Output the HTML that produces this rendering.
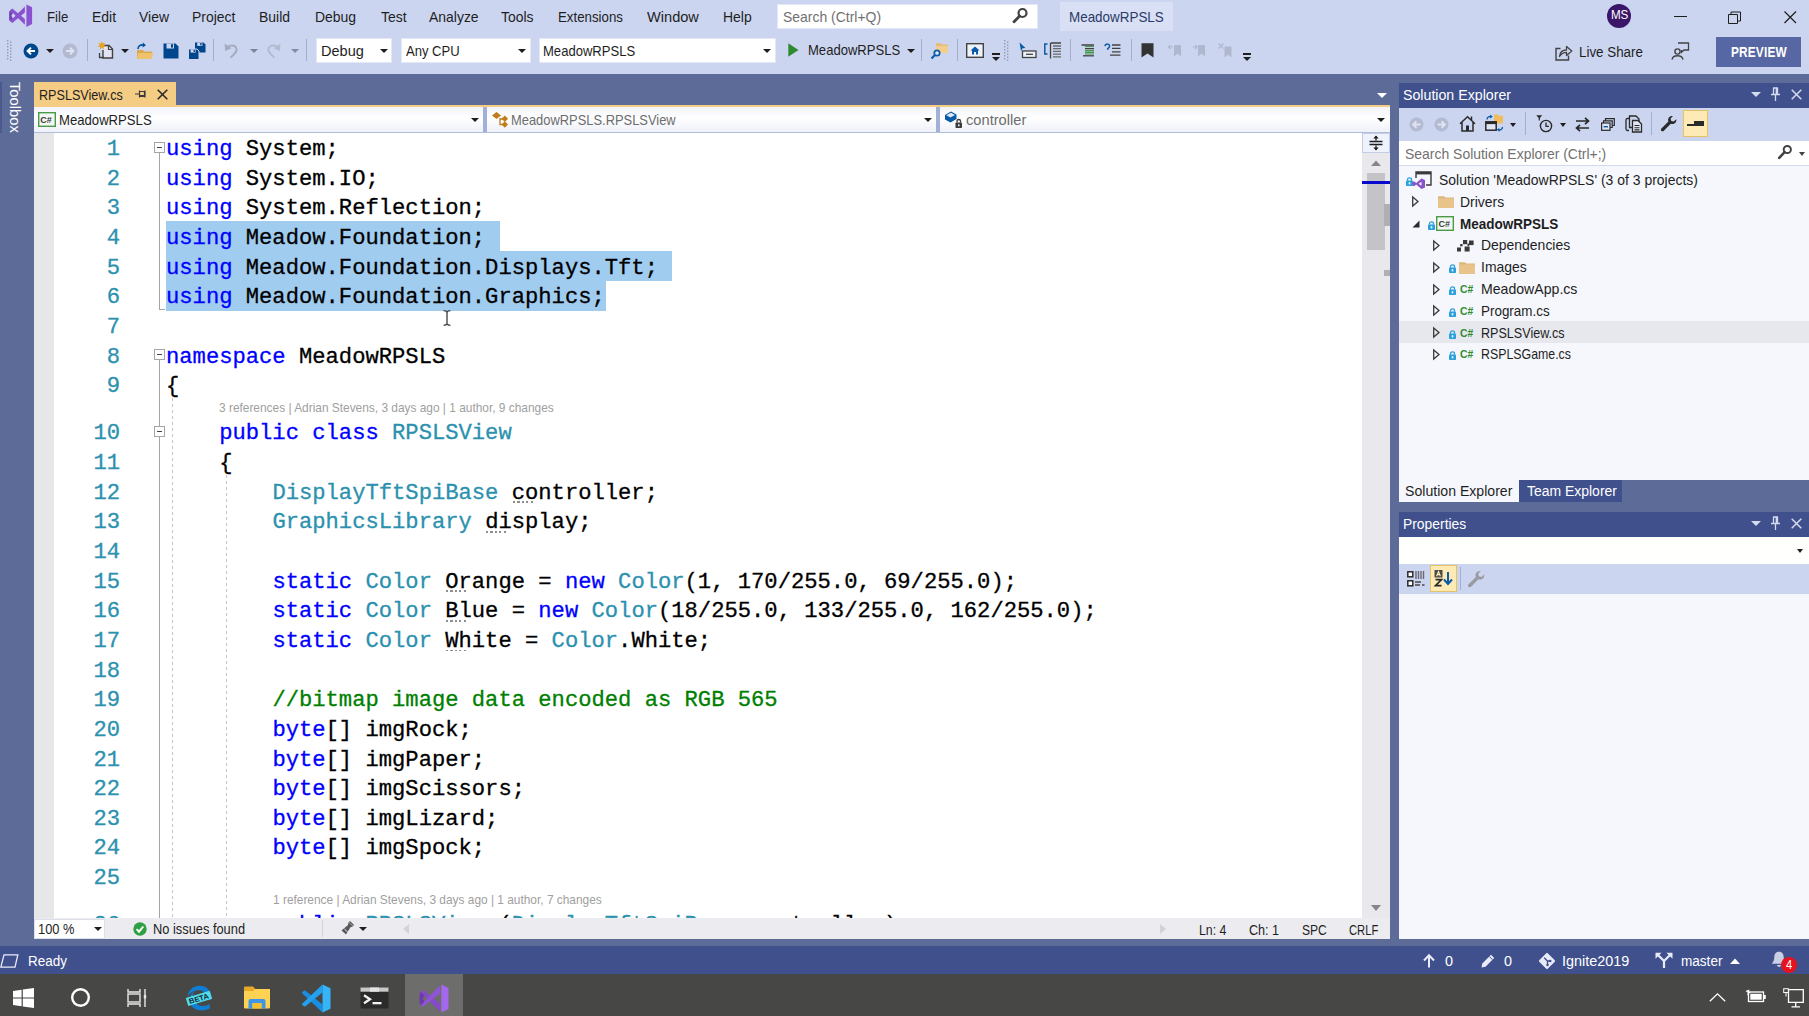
<!DOCTYPE html>
<html>
<head>
<meta charset="utf-8">
<title>MeadowRPSLS - Microsoft Visual Studio</title>
<style>
*{box-sizing:border-box;margin:0;padding:0}
html,body{width:1809px;height:1016px;overflow:hidden;background:#5d6b99;font-family:"Liberation Sans",sans-serif;font-size:14.5px;color:#1e1e1e}
.abs,.t{position:absolute;white-space:nowrap}
.t{line-height:1;transform:scaleX(.93);transform-origin:0 0}
svg{position:absolute;overflow:visible}
#top{position:absolute;left:0;top:0;width:1809px;height:74px;background:#ccd5f0}
.menu{position:absolute;top:8px;font-size:15px;line-height:18px;color:#1e1e1e;white-space:nowrap;transform:scaleX(.93);transform-origin:0 0}
.combo{position:absolute;top:38px;height:25px;background:#fff;border:1px solid #e3e8f6;font-size:15px;line-height:23px;padding-left:4px;white-space:nowrap}
.dd{position:absolute;width:0;height:0;border-left:4px solid transparent;border-right:4px solid transparent;border-top:4px solid #1e1e1e}
.sep{position:absolute;top:39px;width:1.4px;height:22px;background:#a3aecd}
/* editor */
#editor{position:absolute;left:34px;top:132px;width:1356px;height:787px;background:#fff;overflow:hidden}
#code{position:absolute;left:0;top:0;font-family:"Liberation Mono",monospace;font-size:22.17px;color:#000;-webkit-text-stroke:0.3px}
.ln{position:absolute;left:0;height:29.65px;line-height:29.65px;white-space:pre}
.num{position:absolute;left:19px;width:67px;text-align:right;color:#2b91af;height:29.65px;line-height:29.65px}
.k{color:#0000ff}.ty{color:#2b91af}.c{color:#008000}
.lens{position:absolute;font-family:"Liberation Sans",sans-serif;font-size:11.9px;color:#a0a0a0;white-space:nowrap;line-height:14px}
.sel{position:absolute;background:#a0ccf0;height:30.4px}
.guide{position:absolute;width:1px;background:repeating-linear-gradient(to bottom,#c4c4c4 0,#c4c4c4 3px,transparent 3px,transparent 6px)}
.dot{position:relative}.dot i{position:absolute;left:1px;bottom:2.6px;width:21px;height:1.6px;background:repeating-linear-gradient(90deg,#8e8e8e 0,#8e8e8e 2.2px,transparent 2.2px,transparent 4.4px)}
/* tree */
.tr{position:absolute;left:1399px;width:410px;height:22px}
.tr .t{top:3px;font-size:15px;line-height:17px;color:#1e1e1e}
</style>
</head>
<body>
<div id="top"></div>
<!-- VS logo -->
<svg style="left:0;top:0" width="34" height="32" viewBox="0 0 34 32"><path d="M26.4 4.4 L32.1 7.2 V24 L26.4 27 Z" fill="#8a52d0"/><path d="M10 10.2 L12.3 8.5 L24.9 19 V24.8 Z" fill="#8a52d0"/><path d="M10 21.3 L12.3 23 L24.9 12.4 V6.6 Z" fill="#8a52d0"/><path d="M9.1 12.3 L10 10.2 L13 13 L11.4 15.8 L13 18.6 L10 21.3 L9.1 19.7 Z" fill="#7644b6"/></svg>
<div class="menu" style="left:46.5px;transform:scaleX(.88)">File</div>
<div class="menu" style="left:92px">Edit</div>
<div class="menu" style="left:139px">View</div>
<div class="menu" style="left:192px">Project</div>
<div class="menu" style="left:259px">Build</div>
<div class="menu" style="left:315px">Debug</div>
<div class="menu" style="left:381px">Test</div>
<div class="menu" style="left:429px">Analyze</div>
<div class="menu" style="left:501px">Tools</div>
<div class="menu" style="left:558px;transform:scaleX(.885)">Extensions</div>
<div class="menu" style="left:647px;transform:scaleX(.973)">Window</div>
<div class="menu" style="left:723px">Help</div>
<div class="abs" style="left:777px;top:4px;width:261px;height:25px;background:#fff;border:1px solid #e3e8f6"></div>
<div class="menu" style="left:783px;color:#717171">Search (Ctrl+Q)</div>
<svg style="left:1011px;top:7px" width="18" height="18" viewBox="0 0 18 18"><circle cx="11.5" cy="6" r="4" fill="none" stroke="#424242" stroke-width="2.2"/><path d="M8.6 9 L3 14.8" stroke="#424242" stroke-width="2.8" stroke-linecap="round"/></svg>
<div class="abs" style="left:1060px;top:2px;width:113px;height:29px;background:#d9e0f5"></div>
<div class="menu" style="left:1069px;color:#2b3a67;transform:scaleX(.895)">MeadowRPSLS</div>
<!-- avatar + window buttons -->
<div class="abs" style="left:1607px;top:4px;width:24px;height:24px;border-radius:12px;background:#3b1568"></div>
<div class="t" style="left:1611px;top:9px;font-size:12.5px;color:#fff;letter-spacing:-0.2px">MS</div>
<div class="abs" style="left:1674px;top:16px;width:13px;height:1px;background:#1e1e1e"></div>
<svg style="left:1728px;top:11px" width="14" height="13" viewBox="0 0 14 13"><path d="M0.5 3.5 H9.5 V12.5 H0.5 Z M3 3.5 V1 H12.5 V10 H9.5" fill="none" stroke="#1e1e1e" stroke-width="1"/></svg>
<svg style="left:1784px;top:11px" width="13" height="13" viewBox="0 0 13 13"><path d="M0.5 0.5 L12 12 M12 0.5 L0.5 12" stroke="#1e1e1e" stroke-width="1.2"/></svg>
<!-- toolbar row -->
<svg style="left:7px;top:40px" width="6" height="22" viewBox="0 0 6 22"><g fill="#8f98b5"><rect x="0" y="0" width="1.4" height="1.4"/><rect x="3" y="1.5" width="1.4" height="1.4"/><rect x="0" y="3" width="1.4" height="1.4"/><rect x="3" y="4.5" width="1.4" height="1.4"/><rect x="0" y="6" width="1.4" height="1.4"/><rect x="3" y="7.5" width="1.4" height="1.4"/><rect x="0" y="9" width="1.4" height="1.4"/><rect x="3" y="10.5" width="1.4" height="1.4"/><rect x="0" y="12" width="1.4" height="1.4"/><rect x="3" y="13.5" width="1.4" height="1.4"/><rect x="0" y="15" width="1.4" height="1.4"/><rect x="3" y="16.5" width="1.4" height="1.4"/><rect x="0" y="18" width="1.4" height="1.4"/><rect x="3" y="19.5" width="1.4" height="1.4"/></g></svg>
<!-- back / fwd -->
<svg style="left:23px;top:43px" width="16" height="16" viewBox="0 0 16 16"><circle cx="8" cy="8" r="7.5" fill="#00468c"/><path d="M12 8 H5 M8 4.6 L4.6 8 L8 11.4" fill="none" stroke="#fff" stroke-width="2"/></svg>
<div class="dd" style="left:46px;top:49px"></div>
<svg style="left:62px;top:43px" width="16" height="16" viewBox="0 0 16 16"><circle cx="8" cy="8" r="7.5" fill="#b3bacf"/><path d="M4 8 H11 M8 4.6 L11.4 8 L8 11.4" fill="none" stroke="#dfe4f3" stroke-width="2"/></svg>
<div class="sep" style="left:87px"></div>
<!-- new item -->
<svg style="left:97px;top:41px" width="18" height="19" viewBox="0 0 18 19"><path d="M7 4.5 H12 L15.5 8 V17 H6 V9" fill="#e2e3f3" stroke="#424242" stroke-width="1.4"/><path d="M11.5 4.5 V8.5 H15.5" fill="none" stroke="#424242" stroke-width="1.2"/><path d="M2.5 12 V16.5 H7" fill="none" stroke="#424242" stroke-width="1.3"/><path d="M4.5 0 L5.4 2.6 L8 1.6 L6.7 4 L9 5.2 L6.5 5.7 L7 8.4 L4.9 6.6 L3 8.6 L3.2 6 L0.5 5.6 L2.8 4.2 L1.4 1.8 L3.9 2.7 Z" fill="#e8a317"/></svg>
<div class="dd" style="left:121px;top:49px"></div>
<!-- open folder -->
<svg style="left:135px;top:42px" width="19" height="18" viewBox="0 0 19 18"><path d="M2 8 H8 L9.5 9.5 H17 V17 H2 Z" fill="#dba94e"/><path d="M3.5 11 H18.5 L16.5 17 H1.5 Z" fill="#efc36e"/><path d="M3 7 C3 3.5 6 2.5 9 3" fill="none" stroke="#00539c" stroke-width="1.6"/><path d="M7.8 0.5 L11 3.2 L7.6 5.4 Z" fill="#00539c"/></svg>
<!-- save -->
<svg style="left:163px;top:43px" width="16" height="16" viewBox="0 0 16 16"><path d="M0.5 0.5 H12.5 L15.5 3.5 V15.5 H0.5 Z" fill="#00468c"/><rect x="3.5" y="0.5" width="7.5" height="5" fill="#ccd5f0"/><rect x="8" y="1.2" width="2" height="3.4" fill="#00468c"/></svg>
<!-- save all -->
<svg style="left:188px;top:42px" width="18" height="18" viewBox="0 0 18 18"><path d="M7 0.5 H15.5 L17.5 2.5 V10.5 H7 Z" fill="#00468c"/><rect x="9.2" y="0.5" width="5.2" height="3.4" fill="#ccd5f0"/><rect x="12.2" y="1" width="1.4" height="2.3" fill="#00468c"/><path d="M0.5 7 H9 L11 9 V17.5 H0.5 Z" fill="#00468c" stroke="#ccd5f0" stroke-width="1"/><rect x="2.6" y="7.4" width="5" height="3.2" fill="#ccd5f0"/><rect x="5.6" y="7.8" width="1.3" height="2.2" fill="#00468c"/></svg>
<div class="sep" style="left:213px"></div>
<!-- undo / redo -->
<svg style="left:223px;top:42px" width="17" height="17" viewBox="0 0 17 17"><path d="M3 7.5 C5 2.5 12 2 13.5 6.5 C14.5 10 11 12.5 7.5 15.5" fill="none" stroke="#a4abc0" stroke-width="2"/><path d="M1.5 1.5 L2.2 9 L8.5 6.2 Z" fill="#a4abc0"/></svg>
<div class="dd" style="left:250px;top:49px;border-top-color:#7f8598"></div>
<svg style="left:265px;top:42px" width="17" height="17" viewBox="0 0 17 17"><g transform="translate(17,0) scale(-1,1)"><path d="M3 7.5 C5 2.5 12 2 13.5 6.5 C14.5 10 11 12.5 7.5 15.5" fill="none" stroke="#b4bbd0" stroke-width="2"/><path d="M1.5 1.5 L2.2 9 L8.5 6.2 Z" fill="#b4bbd0"/></g></svg>
<div class="dd" style="left:291px;top:49px;border-top-color:#858b9e"></div>
<div class="sep" style="left:306px"></div>
<div class="combo" style="left:316px;width:76px"><span style="display:inline-block;transform:scaleX(.97);transform-origin:0 0">Debug</span></div><div class="dd" style="left:380px;top:49px"></div>
<div class="combo" style="left:401px;width:130px"><span style="display:inline-block;transform:scaleX(.87);transform-origin:0 0">Any CPU</span></div><div class="dd" style="left:518px;top:49px"></div>
<div class="combo" style="left:539px;width:237px;padding-left:3px"><span style="display:inline-block;transform:scaleX(.87);transform-origin:0 0">MeadowRPSLS</span></div><div class="dd" style="left:763px;top:49px"></div>
<svg style="left:788px;top:43px" width="11" height="14" viewBox="0 0 11 14"><path d="M0.3 0.3 L10.5 7 L0.3 13.7 Z" fill="#2d8a2d"/></svg>
<div class="menu" style="left:808px;top:41px;transform:scaleX(.87)">MeadowRPSLS</div>
<div class="dd" style="left:907px;top:49px"></div>
<div class="sep" style="left:921px"></div>
<!-- find in files -->
<svg style="left:930px;top:41px" width="20" height="19" viewBox="0 0 20 19"><path d="M6 2 H11 L12.5 3.5 H18 V12 H6 Z" fill="#e3bd7c"/><path d="M6 5 H18 V12 H6 Z" fill="#f2cd8d"/><circle cx="7" cy="12" r="2.7" fill="#dfe8fa" stroke="#0a5aa8" stroke-width="1.7"/><path d="M5 14 L1.5 17.5" stroke="#0a5aa8" stroke-width="2.2"/></svg>
<div class="sep" style="left:957px"></div>
<svg style="left:966px;top:43px" width="18" height="15" viewBox="0 0 18 15"><rect x="0.7" y="0.7" width="16.6" height="13.6" fill="#eef2fb" stroke="#424242" stroke-width="1.4"/><path d="M9 3.5 L4.5 7.5 H6 V11.5 H8 V9 H10 V11.5 H12 V7.5 H13.5 Z" fill="#0a5aa8"/></svg>
<div class="abs" style="left:992px;top:53px;width:8px;height:1.5px;background:#1e1e1e"></div><div class="dd" style="left:992px;top:57px"></div>
<svg style="left:1004px;top:40px" width="6" height="22" viewBox="0 0 6 22"><g fill="#8f98b5"><rect x="0" y="0" width="1.4" height="1.4"/><rect x="3" y="1.5" width="1.4" height="1.4"/><rect x="0" y="3" width="1.4" height="1.4"/><rect x="3" y="4.5" width="1.4" height="1.4"/><rect x="0" y="6" width="1.4" height="1.4"/><rect x="3" y="7.5" width="1.4" height="1.4"/><rect x="0" y="9" width="1.4" height="1.4"/><rect x="3" y="10.5" width="1.4" height="1.4"/><rect x="0" y="12" width="1.4" height="1.4"/><rect x="3" y="13.5" width="1.4" height="1.4"/><rect x="0" y="15" width="1.4" height="1.4"/><rect x="3" y="16.5" width="1.4" height="1.4"/><rect x="0" y="18" width="1.4" height="1.4"/><rect x="3" y="19.5" width="1.4" height="1.4"/></g></svg>
<svg style="left:1019px;top:42px" width="18" height="17" viewBox="0 0 18 17"><path d="M0.5 0.5 L6.5 6 L3.6 6.3 L2 9 Z" fill="#0a5aa8"/><rect x="3.5" y="9" width="13.5" height="6.5" fill="#eef2fb" stroke="#424242" stroke-width="1.3"/><path d="M7 12.3 H14" stroke="#424242" stroke-width="1.3"/></svg>
<svg style="left:1044px;top:42px" width="18" height="17" viewBox="0 0 18 17"><path d="M3.5 2 H0.8 V12 H3.5" fill="none" stroke="#0a5aa8" stroke-width="1.5"/><path d="M6.5 1 H17 M6.5 1 V16.5" stroke="#424242" stroke-width="1.3" fill="none"/><path d="M9 4 H17 M9 6.7 H17 M9 9.4 H17 M9 12.1 H17 M9 14.8 H17" stroke="#6a6a6a" stroke-width="1.3"/></svg>
<div class="sep" style="left:1070px"></div>
<svg style="left:1081px;top:44px" width="14" height="13" viewBox="0 0 14 13"><path d="M0.5 1 H13 M4 4.6 H13" stroke="#424242" stroke-width="1.3"/><path d="M4 8.2 H13" stroke="#2d8a2d" stroke-width="1.3"/><path d="M2 11.8 H13" stroke="#424242" stroke-width="1.3"/><path d="M4 2.6 H13 M4 6.4 H13 M4 10 H13" stroke="#2d8a2d" stroke-width="0.9"/></svg>
<svg style="left:1104px;top:43px" width="17" height="15" viewBox="0 0 17 15"><path d="M1 3.2 C1.5 0.3 6 0.5 5.6 3.4 C5.3 5 3.5 5 3.5 6.8" fill="none" stroke="#0a5aa8" stroke-width="1.5"/><path d="M8 2 H16.5 M8 5.4 H16.5 M8 8.8 H16.5 M6 12.2 H16.5" stroke="#424242" stroke-width="1.3"/></svg>
<div class="sep" style="left:1131px"></div>
<svg style="left:1141px;top:43px" width="13" height="15" viewBox="0 0 13 15"><path d="M0.5 0.3 H12.5 V14.6 L6.5 10.4 L0.5 14.6 Z" fill="#333"/></svg>
<svg style="left:1168px;top:43px" width="14" height="14" viewBox="0 0 14 14"><path d="M6 2 H13 V13.5 L9.5 10.8 L6 13.5 Z" fill="#b0b8cf"/><path d="M0.5 4 H5 M2.5 2 L0.5 4 L2.5 6" fill="none" stroke="#b0b8cf" stroke-width="1.2"/></svg>
<svg style="left:1192px;top:43px" width="14" height="14" viewBox="0 0 14 14"><path d="M6 2 H13 V13.5 L9.5 10.8 L6 13.5 Z" fill="#b0b8cf"/><path d="M0.5 4 H5 M3 2 L5 4 L3 6" fill="none" stroke="#b0b8cf" stroke-width="1.2"/></svg>
<svg style="left:1218px;top:43px" width="15" height="15" viewBox="0 0 15 15"><path d="M6.5 3.5 H13.5 V14.5 L10 11.8 L6.5 14.5 Z" fill="#b0b8cf"/><path d="M0.5 0.5 L5.5 5.5 M5.5 0.5 L0.5 5.5" stroke="#b0b8cf" stroke-width="1.2"/></svg>
<div class="abs" style="left:1243px;top:53px;width:8px;height:1.5px;background:#1e1e1e"></div><div class="dd" style="left:1243px;top:57px"></div>
<!-- live share -->
<svg style="left:1555px;top:44px" width="18" height="17" viewBox="0 0 18 17"><path d="M5.5 4.5 H1 V16 H13.5 V11.5" fill="none" stroke="#424242" stroke-width="1.4"/><path d="M4.5 12.5 C5 8 8 6 11.5 6 V2.5 L16.8 7 L11.5 11.5 V8.3 C9 8.3 6.5 9 4.5 12.5 Z" fill="none" stroke="#424242" stroke-width="1.3" stroke-linejoin="round"/></svg>
<div class="menu" style="left:1579px;top:43px;font-size:15.5px;transform:scaleX(.862)">Live Share</div>
<svg style="left:1671px;top:42px" width="19" height="19" viewBox="0 0 19 19"><path d="M7 1 H17.5 V8 H13 L10.5 10.3 V8" fill="none" stroke="#424242" stroke-width="1.3"/><circle cx="6.5" cy="9.5" r="2.6" fill="none" stroke="#424242" stroke-width="1.4"/><path d="M1 17.5 C2 12.5 11 12.5 12 17.5" fill="none" stroke="#424242" stroke-width="1.4"/></svg>
<div class="abs" style="left:1716px;top:37px;width:85px;height:30px;background:#5767a3"></div>
<div class="t" style="left:1731px;top:45px;font-size:14px;font-weight:bold;color:#fff;letter-spacing:0.2px;transform:scaleX(.846)">PREVIEW</div>
<!-- left toolbox strip -->
<div class="abs" style="left:0;top:82px;width:2.4px;height:51px;background:#4a5a8e"></div>
<div class="abs" style="left:5px;top:82px;width:20px;height:56px;"><div style="position:absolute;left:0;top:0;transform:rotate(90deg) scaleX(.95);transform-origin:0 0;margin-left:19px;font-size:15.5px;line-height:18px;color:#fff;white-space:nowrap">Toolbox</div></div>
<!-- tab strip -->
<div class="abs" style="left:34px;top:82px;width:142px;height:24px;background:#f5cc84"></div>
<div class="abs" style="left:34px;top:105px;width:1356px;height:2px;background:#f5cc84"></div>
<div class="t" style="left:39px;top:87px;font-size:15px;color:#1e1e1e;transform:scaleX(.84)">RPSLSView.cs</div>
<svg style="left:135px;top:89px" width="12" height="10" viewBox="0 0 12 10"><path d="M0 5 H4.5 M4.5 1.5 V8.5 M4.5 2.5 H9.5 V6.5 H4.5 M4.5 7.5 H9.5 M10 1.5 V8.5" fill="none" stroke="#3a3a3a" stroke-width="1.2"/></svg>
<svg style="left:157px;top:89px" width="11" height="11" viewBox="0 0 11 11"><path d="M0.7 0.7 L10.3 10.3 M10.3 0.7 L0.7 10.3" stroke="#2a2a2a" stroke-width="1.6"/></svg>
<div class="dd" style="left:1377px;top:93px;border-width:5px 5px 0 5px;border-top-color:#fff"></div>
<!-- nav bar -->
<div class="abs" style="left:34px;top:107px;width:1356px;height:26px;background:linear-gradient(#f2f4fb,#ffffff 45%,#eef1f9);border-bottom:1px solid #b9c3de"></div>
<div class="abs" style="left:483px;top:107px;width:4px;height:25px;background:#a3b0d6"></div>
<div class="abs" style="left:936px;top:107px;width:4px;height:25px;background:#a3b0d6"></div>
<svg style="left:38px;top:112px" width="18" height="15" viewBox="0 0 18 15"><rect x="0.7" y="0.7" width="16.6" height="13.6" fill="#f4f8f4" stroke="#4a9a4a" stroke-width="1.4"/><text x="2.3" y="11" font-family="Liberation Sans" font-weight="bold" font-size="9" fill="#3a3a3a">C#</text></svg>
<div class="t" style="left:59px;top:112px;font-size:15px;color:#1e1e1e;transform:scaleX(.875)">MeadowRPSLS</div>
<div class="dd" style="left:471px;top:118px"></div>
<svg style="left:491px;top:111px" width="18" height="17" viewBox="0 0 18 17"><path d="M5.5 1 L10 4.5 L5.5 8 L1 4.5 Z" fill="#c27d1a"/><path d="M9 7 V13.5 H12 M9 8 H12" fill="none" stroke="#c27d1a" stroke-width="1.3"/><rect x="11.5" y="5.5" width="4.6" height="4.6" fill="#c27d1a" transform="rotate(45 13.8 7.8)"/><rect x="11.5" y="11.2" width="4.6" height="4.6" fill="#c27d1a" transform="rotate(45 13.8 13.5)"/></svg>
<div class="t" style="left:511px;top:112px;font-size:15px;color:#6d6d6d;transform:scaleX(.86)">MeadowRPSLS.RPSLSView</div>
<div class="dd" style="left:924px;top:118px"></div>
<svg style="left:944px;top:110px" width="20" height="19" viewBox="0 0 20 19"><path d="M1 5 L7 1.5 L12.5 4.5 V9 L6.5 12.5 L1 9.5 Z" fill="#0a5aa8"/><path d="M2.2 5.2 L7 2.8 L11 5 L6.5 7.5 Z" fill="#dfe8fa"/><rect x="11.5" y="12.5" width="6.5" height="5.5" rx="0.8" fill="#3a3a3a"/><path d="M13 12.5 V11 C13 9 16.5 9 16.5 11 V12.5" fill="none" stroke="#3a3a3a" stroke-width="1.3"/><rect x="14.1" y="14.3" width="1.4" height="2" fill="#fff"/></svg>
<div class="t" style="left:966px;top:112px;font-size:15px;color:#6d6d6d;transform:scaleX(.977)">controller</div>
<div class="dd" style="left:1377px;top:118px"></div>
<!--EDSTART-->
<div id="editor">
<div class="abs" style="left:0;top:0;width:20px;height:787px;background:#e6e7e8"></div>
<div class="sel" style="left:132px;top:89.3px;width:333.5px"></div>
<div class="sel" style="left:132px;top:119.0px;width:506.4px"></div>
<div class="sel" style="left:132px;top:148.7px;width:439.9px"></div>
<div class="abs" style="left:125px;top:15.2px;width:1px;height:162.1px;background:#a5a5a5"></div>
<div class="abs" style="left:125px;top:177.3px;width:6px;height:1px;background:#a5a5a5"></div>
<div class="abs" style="left:125px;top:222.8px;width:1px;height:600px;background:#a5a5a5"></div>
<div class="abs" style="left:120px;top:9.7px;width:11px;height:11px;background:#fff;border:1px solid #a5a5a5"><div style="position:absolute;left:2px;top:4px;width:5px;height:1px;background:#444"></div></div>
<div class="abs" style="left:120px;top:217.3px;width:11px;height:11px;background:#fff;border:1px solid #a5a5a5"><div style="position:absolute;left:2px;top:4px;width:5px;height:1px;background:#444"></div></div>
<div class="abs" style="left:120px;top:294.0px;width:11px;height:11px;background:#fff;border:1px solid #a5a5a5"><div style="position:absolute;left:2px;top:4px;width:5px;height:1px;background:#444"></div></div>
<div class="guide" style="left:138px;top:266.2px;height:600px"></div>
<div class="guide" style="left:192px;top:342.9px;height:600px"></div>
<div class="abs" style="left:0;top:0;width:1356px;height:1.4px;background:#b3bdd8"></div>
<svg style="left:409px;top:178px" width="8" height="16" viewBox="0 0 8 16"><path d="M0.6 0.7 C2.6 0.7 3.6 1.2 4 2.2 C4.4 1.2 5.4 0.7 7.4 0.7 M4 2 V14 M0.6 15.3 C2.6 15.3 3.6 14.8 4 13.8 C4.4 14.8 5.4 15.3 7.4 15.3" fill="none" stroke="#3c3c3c" stroke-width="1.3"/></svg>
<div id="code">
<div class="num" style="top:3.1px">1</div><div class="ln" style="left:132px;top:3.1px"><span class="k">using</span> System;</div>
<div class="num" style="top:32.8px">2</div><div class="ln" style="left:132px;top:32.8px"><span class="k">using</span> System.IO;</div>
<div class="num" style="top:62.4px">3</div><div class="ln" style="left:132px;top:62.4px"><span class="k">using</span> System.Reflection;</div>
<div class="num" style="top:92.0px">4</div><div class="ln" style="left:132px;top:92.0px"><span class="k">using</span> Meadow.Foundation;</div>
<div class="num" style="top:121.7px">5</div><div class="ln" style="left:132px;top:121.7px"><span class="k">using</span> Meadow.Foundation.Displays.Tft;</div>
<div class="num" style="top:151.3px">6</div><div class="ln" style="left:132px;top:151.3px"><span class="k">using</span> Meadow.Foundation.Graphics;</div>
<div class="num" style="top:181.0px">7</div><div class="ln" style="left:132px;top:181.0px"></div>
<div class="num" style="top:210.6px">8</div><div class="ln" style="left:132px;top:210.6px"><span class="k">namespace</span> MeadowRPSLS</div>
<div class="num" style="top:240.3px">9</div><div class="ln" style="left:132px;top:240.3px">{</div>
<div class="num" style="top:287.3px">10</div><div class="ln" style="left:132px;top:287.3px">    <span class="k">public</span> <span class="k">class</span> <span class="ty">RPSLSView</span></div>
<div class="num" style="top:317.0px">11</div><div class="ln" style="left:132px;top:317.0px">    {</div>
<div class="num" style="top:346.6px">12</div><div class="ln" style="left:132px;top:346.6px">        <span class="ty">DisplayTftSpiBase</span> <span class="dot">co<i></i></span>ntroller;</div>
<div class="num" style="top:376.3px">13</div><div class="ln" style="left:132px;top:376.3px">        <span class="ty">GraphicsLibrary</span> <span class="dot">di<i></i></span>splay;</div>
<div class="num" style="top:405.9px">14</div><div class="ln" style="left:132px;top:405.9px"></div>
<div class="num" style="top:435.6px">15</div><div class="ln" style="left:132px;top:435.6px">        <span class="k">static</span> <span class="ty">Color</span> <span class="dot">Or<i></i></span>ange = <span class="k">new</span> <span class="ty">Color</span>(1, 170/255.0, 69/255.0);</div>
<div class="num" style="top:465.2px">16</div><div class="ln" style="left:132px;top:465.2px">        <span class="k">static</span> <span class="ty">Color</span> <span class="dot">Bl<i></i></span>ue = <span class="k">new</span> <span class="ty">Color</span>(18/255.0, 133/255.0, 162/255.0);</div>
<div class="num" style="top:494.9px">17</div><div class="ln" style="left:132px;top:494.9px">        <span class="k">static</span> <span class="ty">Color</span> <span class="dot">Wh<i></i></span>ite = <span class="ty">Color</span>.White;</div>
<div class="num" style="top:524.5px">18</div><div class="ln" style="left:132px;top:524.5px"></div>
<div class="num" style="top:554.2px">19</div><div class="ln" style="left:132px;top:554.2px">        <span class="c">//bitmap image data encoded as RGB 565</span></div>
<div class="num" style="top:583.9px">20</div><div class="ln" style="left:132px;top:583.9px">        <span class="k">byte</span>[] imgRock;</div>
<div class="num" style="top:613.5px">21</div><div class="ln" style="left:132px;top:613.5px">        <span class="k">byte</span>[] imgPaper;</div>
<div class="num" style="top:643.1px">22</div><div class="ln" style="left:132px;top:643.1px">        <span class="k">byte</span>[] imgScissors;</div>
<div class="num" style="top:672.8px">23</div><div class="ln" style="left:132px;top:672.8px">        <span class="k">byte</span>[] imgLizard;</div>
<div class="num" style="top:702.4px">24</div><div class="ln" style="left:132px;top:702.4px">        <span class="k">byte</span>[] imgSpock;</div>
<div class="num" style="top:732.1px">25</div><div class="ln" style="left:132px;top:732.1px"></div>
<div class="num" style="top:779.1px">26</div><div class="ln" style="left:132px;top:779.1px">        <span class="k">public</span> <span class="ty">RPSLSView</span> (<span class="ty">DisplayTftSpiBase</span> controller)</div>
</div>
<div class="lens" style="left:185px;top:268.7px">3 references | Adrian Stevens, 3 days ago | 1 author, 9 changes</div>
<div class="lens" style="left:239px;top:760.5px">1 reference | Adrian Stevens, 3 days ago | 1 author, 7 changes</div>
</div>
<!--EDEND-->
<!-- editor v-scrollbar -->
<div class="abs" style="left:1362px;top:133px;width:28px;height:786px;background:#e9e9ed"></div>
<div class="abs" style="left:1362px;top:133px;width:28px;height:20px;background:#eef2fc;border:1px solid #c5cde6"></div>
<svg style="left:1369px;top:135px" width="14" height="16" viewBox="0 0 14 16"><path d="M0.5 6.5 H13.5 M0.5 9.5 H13.5 M7 1 V5.5 M7 10.5 V15" stroke="#1e1e1e" stroke-width="1.3"/><path d="M4.3 3.6 L7 0.6 L9.7 3.6 Z M4.3 12.4 L7 15.4 L9.7 12.4 Z" fill="#1e1e1e"/></svg>
<svg style="left:1371px;top:160px" width="10" height="6" viewBox="0 0 10 6"><path d="M0 6 L5 0.5 L10 6 Z" fill="#86868a"/></svg>
<div class="abs" style="left:1367px;top:173px;width:18px;height:77px;background:#c4c4c8"></div>
<div class="abs" style="left:1384px;top:204px;width:6px;height:22px;background:#b0b0b2"></div>
<div class="abs" style="left:1384px;top:270px;width:6px;height:6px;background:#b0b0b2"></div>
<div class="abs" style="left:1362px;top:181px;width:28px;height:3px;background:#0a0acd"></div>
<div class="dd" style="left:1371px;top:905px;border-width:6px 5px 0 5px;border-top-color:#86868a"></div>
<!-- editor bottom bar -->
<div class="abs" style="left:34px;top:918px;width:1356px;height:21px;background:#ececf0"></div>
<div class="abs" style="left:34px;top:919px;width:71px;height:20px;background:#fff;border:1px solid #dcdfe9"></div>
<div class="t" style="left:38px;top:922px;font-size:14.5px;color:#1e1e1e;transform:scaleX(.885)">100 %</div>
<div class="dd" style="left:94px;top:927px"></div>
<svg style="left:133px;top:922px" width="14" height="14" viewBox="0 0 14 14"><circle cx="7" cy="7" r="6.7" fill="#2ea043"/><path d="M3.6 7.2 L6 9.7 L10.3 4.5" fill="none" stroke="#fff" stroke-width="1.9"/></svg>
<div class="t" style="left:153px;top:922px;font-size:14.5px;color:#1e1e1e;transform:scaleX(.885)">No issues found</div>
<div class="abs" style="left:322px;top:920px;width:1px;height:17px;background:#d2d4dc"></div>
<svg style="left:340px;top:921px" width="15" height="15" viewBox="0 0 15 15"><path d="M8.5 1 L13 5.5 L10.5 6.3 L6 13.5 L1.5 9.5 L8 4 Z" fill="#5a5a5a"/><path d="M9.5 0.5 L13.5 4.5" stroke="#5a5a5a" stroke-width="1.6"/><path d="M4.5 8 L7.8 11.2" stroke="#ececf0" stroke-width="1"/></svg>
<div class="dd" style="left:359px;top:927px"></div>
<svg style="left:403px;top:924px" width="6" height="10" viewBox="0 0 6 10"><path d="M6 0 L0 5 L6 10 Z" fill="#d2d2d8"/></svg>
<svg style="left:1160px;top:924px" width="6" height="10" viewBox="0 0 6 10"><path d="M0 0 L6 5 L0 10 Z" fill="#d2d2d8"/></svg>
<div class="t" style="left:1199px;top:923px;font-size:14px;color:#1e1e1e;transform:scaleX(.88)">Ln: 4</div>
<div class="t" style="left:1249px;top:923px;font-size:14px;color:#1e1e1e;transform:scaleX(.9)">Ch: 1</div>
<div class="t" style="left:1302px;top:923px;font-size:14px;color:#1e1e1e;transform:scaleX(.86)">SPC</div>
<div class="t" style="left:1349px;top:923px;font-size:14px;color:#1e1e1e;transform:scaleX(.8)">CRLF</div>
<!-- ================= Solution Explorer ================= -->
<div class="abs" style="left:1399px;top:83px;width:410px;height:25px;background:#40508d"></div>
<div class="t" style="left:1403px;top:87px;font-size:15.5px;color:#fff;transform:scaleX(.915)">Solution Explorer</div>
<div class="dd" style="left:1751px;top:92px;border-width:5px 5px 0 5px;border-top-color:#d5dbef"></div>
<svg style="left:1770px;top:87px" width="11" height="15" viewBox="0 0 11 15"><path d="M3 1 H8 M3.5 1 V7 M7.5 1 V7 M6.3 1 V7 M1 7.5 H10 M5.5 8 V14" fill="none" stroke="#d5dbef" stroke-width="1.3"/></svg>
<svg style="left:1791px;top:89px" width="11" height="11" viewBox="0 0 11 11"><path d="M0.7 0.7 L10.3 10.3 M10.3 0.7 L0.7 10.3" stroke="#d5dbef" stroke-width="1.5"/></svg>
<div class="abs" style="left:1399px;top:108px;width:410px;height:33px;background:#ccd5f0"></div>
<svg style="left:1409px;top:117px" width="15" height="15" viewBox="0 0 15 15"><circle cx="7.5" cy="7.5" r="7" fill="#b4bbd0"/><path d="M11.5 7.5 H4.5 M7.5 4.2 L4.2 7.5 L7.5 10.8" fill="none" stroke="#dfe4f3" stroke-width="1.9"/></svg>
<svg style="left:1434px;top:117px" width="15" height="15" viewBox="0 0 15 15"><circle cx="7.5" cy="7.5" r="7" fill="#b4bbd0"/><path d="M3.5 7.5 H10.5 M7.5 4.2 L10.8 7.5 L7.5 10.8" fill="none" stroke="#dfe4f3" stroke-width="1.9"/></svg>
<svg style="left:1459px;top:115px" width="17" height="17" viewBox="0 0 17 17"><path d="M1 8.8 L8.5 1.8 L16 8.8 M3 7.5 V16 H14 V7.5 M12.5 5 V1.5" fill="none" stroke="#2a2a2a" stroke-width="1.5"/><rect x="7" y="10.5" width="3" height="5.5" fill="#2a2a2a"/></svg>
<svg style="left:1485px;top:114px" width="19" height="18" viewBox="0 0 19 18"><path d="M9 0.5 H13 L14.2 1.8 H18 V9.5 H9 Z" fill="#efbd5e"/><rect x="0.8" y="7.8" width="10.4" height="8.4" fill="#dfe5f5" stroke="#2a2a2a" stroke-width="1.5"/><path d="M0.8 9 H11.2" stroke="#2a2a2a" stroke-width="2.2"/><path d="M2 5.5 C2 3 4 2.3 6 2.6" fill="none" stroke="#0a5aa8" stroke-width="1.4"/><path d="M5.2 0.6 L7.8 2.8 L5 4.6 Z" fill="#0a5aa8"/><path d="M17.5 13 C17.5 15.5 15.5 16.2 13.5 15.9" fill="none" stroke="#0a5aa8" stroke-width="1.4"/><path d="M14.3 13.9 L11.7 15.8 L14.5 17.7 Z" fill="#0a5aa8"/></svg>
<div class="dd" style="left:1510px;top:123px;border-width:4px 3.5px 0 3.5px"></div>
<div class="abs" style="left:1524.5px;top:112px;width:1.6px;height:23px;background:#a3afd2"></div>
<svg style="left:1536px;top:115px" width="17" height="18" viewBox="0 0 17 18"><circle cx="10" cy="11" r="5.6" fill="none" stroke="#2a2a2a" stroke-width="1.4"/><path d="M10 7.5 V11.3 H13" fill="none" stroke="#2a2a2a" stroke-width="1.3"/><path d="M0.3 0.3 H6.3 L3.9 3 V5.6 H2.7 V3 Z" fill="#2a2a2a"/></svg>
<div class="dd" style="left:1560px;top:123px;border-width:4px 3.5px 0 3.5px"></div>
<svg style="left:1575px;top:117px" width="15" height="15" viewBox="0 0 15 15"><path d="M1 4 H13.5 M10 0.8 L13.5 4 L10 7.2 M14 11 H1.5 M5 7.8 L1.5 11 L5 14.2" fill="none" stroke="#2a2a2a" stroke-width="1.7"/></svg>
<svg style="left:1601px;top:118px" width="14" height="13" viewBox="0 0 14 13"><path d="M4.5 3 V0.7 H13.3 V7.5 H11" fill="none" stroke="#2a2a2a" stroke-width="1.2"/><path d="M2.5 5 V2.8 H11.2 V9.5 H9" fill="none" stroke="#2a2a2a" stroke-width="1.2"/><rect x="0.6" y="5" width="8.4" height="7.3" fill="#dfe5f5" stroke="#2a2a2a" stroke-width="1.2"/><path d="M2.6 8.7 H7" stroke="#0a5aa8" stroke-width="1.4"/></svg>
<svg style="left:1625px;top:115px" width="18" height="18" viewBox="0 0 18 18"><path d="M5 3.5 H2.5 Q1 3.5 1 5 V14 Q1 15.5 2.5 15.5 H4" fill="none" stroke="#2a2a2a" stroke-width="1.3"/><path d="M4.5 1 H11 L14 4 V12.5 H4.5 Z" fill="none" stroke="#2a2a2a" stroke-width="1.3"/><path d="M7.5 5.5 H13 L16.5 9 V17 H7.5 Z" fill="#dfe5f5" stroke="#2a2a2a" stroke-width="1.3"/><path d="M9.5 10.5 H14.5 M9.5 12.7 H14.5 M9.5 14.9 H14.5" stroke="#2a2a2a" stroke-width="1.1"/></svg>
<div class="abs" style="left:1650.5px;top:112px;width:1.6px;height:23px;background:#a3afd2"></div>
<svg style="left:1660px;top:115px" width="17" height="17" viewBox="0 0 17 17"><path d="M16.3 4.2 C16.8 7.5 13.8 10 10.8 8.8 L3.6 16 C2.2 17.2 0 15.2 1.2 13.7 L8.4 6.5 C7.2 3.3 9.8 0.4 13 1 L10.6 3.6 L11.2 6 L13.7 6.6 Z" fill="#2a2a2a"/></svg>
<div class="abs" style="left:1683px;top:110px;width:25px;height:27px;background:#fdeab5;border:1px solid #e5c365"></div>
<div class="abs" style="left:1687px;top:124px;width:17px;height:2px;background:#2a2a2a"></div><div class="abs" style="left:1694px;top:121px;width:10px;height:4px;background:#2a2a2a"></div>
<div class="abs" style="left:1399px;top:141px;width:410px;height:25px;background:#fff;border-bottom:1px solid #d3daee"></div>
<div class="t" style="left:1405px;top:146px;font-size:15px;color:#717171">Search Solution Explorer (Ctrl+;)</div>
<svg style="left:1777px;top:144px" width="16" height="16" viewBox="0 0 16 16"><circle cx="10.3" cy="5.5" r="3.6" fill="none" stroke="#424242" stroke-width="2"/><path d="M7.6 8.2 L2.2 13.8" stroke="#424242" stroke-width="2.6" stroke-linecap="round"/></svg>
<div class="dd" style="left:1799px;top:152px;border-width:4px 3.5px 0 3.5px;border-top-color:#424242"></div>
<div class="abs" style="left:1399px;top:166px;width:410px;height:314px;background:#f5f7fc"></div>
<!--TREESTART-->
<div class="abs" style="left:1399px;top:321px;width:410px;height:22px;background:#e7e8ee"></div>
<svg style="left:1405.5px;top:177px" width="7" height="9" viewBox="0 0 7 9"><rect x="0" y="3.6" width="7" height="5.4" rx="0.8" fill="#2aa0dc"/><path d="M1.5 3.8 V2.6 C1.5 0.4 5.5 0.4 5.5 2.6 V3.8" fill="none" stroke="#2aa0dc" stroke-width="1.3"/><rect x="2.7" y="5.2" width="1.6" height="2.2" fill="#f5f7fc"/></svg>
<svg style="left:1412px;top:171px" width="20" height="18" viewBox="0 0 20 18"><path d="M4 7 V1 H19 V14 H14" fill="none" stroke="#3a3a3a" stroke-width="1.4"/><path d="M4 2.2 H19" stroke="#3a3a3a" stroke-width="2.4"/><path d="M9.5 7.5 L13 9 V16.5 L9.5 18 L4.2 13.4 L2 15.2 L0.5 14.4 V11 L2 10.2 L4.2 12 Z M9.5 10.8 L6.6 12.7 L9.5 14.7 Z" fill="#8a52c9" fill-rule="evenodd"/></svg>
<div class="t" style="left:1438.5px;top:172.0px;font-size:15px;color:#1e1e1e">Solution 'MeadowRPSLS' (3 of 3 projects)</div>
<svg style="left:1412px;top:196.3px" width="7" height="11" viewBox="0 0 7 11"><path d="M0.7 0.9 L6 5.5 L0.7 10.1 Z" fill="none" stroke="#3a3a3a" stroke-width="1.3"/></svg>
<svg style="left:1437.5px;top:195.3px" width="16" height="13" viewBox="0 0 16 13"><path d="M0 1.2 H6 L7.3 2.6 H16 V13 H0 Z" fill="#dcb67a"/><path d="M0 3.4 H16 V13 H0 Z" fill="#e8c48a"/></svg>
<div class="t" style="left:1460px;top:193.8px;font-size:15px;color:#1e1e1e">Drivers</div>
<svg style="left:1411.5px;top:220.1px" width="8" height="8" viewBox="0 0 8 8"><path d="M7.5 0.5 V7.5 H0.5 Z" fill="#2a2a2a"/></svg>
<svg style="left:1427.5px;top:220.6px" width="7" height="9" viewBox="0 0 7 9"><rect x="0" y="3.6" width="7" height="5.4" rx="0.8" fill="#2aa0dc"/><path d="M1.5 3.8 V2.6 C1.5 0.4 5.5 0.4 5.5 2.6 V3.8" fill="none" stroke="#2aa0dc" stroke-width="1.3"/><rect x="2.7" y="5.2" width="1.6" height="2.2" fill="#f5f7fc"/></svg>
<svg style="left:1436px;top:216.1px" width="18" height="15" viewBox="0 0 18 15"><rect x="0.7" y="0.7" width="16.6" height="13.6" fill="#f4f8f4" stroke="#4a9a4a" stroke-width="1.4"/><text x="2.6" y="11" font-family="Liberation Sans" font-weight="bold" font-size="9" fill="#3a3a3a">C#</text></svg>
<div class="t" style="left:1460px;top:215.6px;font-size:15px;color:#1e1e1e;font-weight:bold;transform:scaleX(.9)">MeadowRPSLS</div>
<svg style="left:1433px;top:239.9px" width="7" height="11" viewBox="0 0 7 11"><path d="M0.7 0.9 L6 5.5 L0.7 10.1 Z" fill="none" stroke="#3a3a3a" stroke-width="1.3"/></svg>
<svg style="left:1457px;top:239.9px" width="17" height="12" viewBox="0 0 17 12"><g fill="#3a3a3a"><rect x="6" y="0" width="4.2" height="4.2"/><rect x="12" y="0.5" width="4.6" height="4.6"/><rect x="0" y="7.5" width="4" height="4"/><rect x="7.6" y="6.5" width="5" height="5"/><rect x="3.2" y="4" width="2.4" height="2.4"/><rect x="10.5" y="3.5" width="1.6" height="2.6"/></g></svg>
<div class="t" style="left:1481px;top:237.4px;font-size:15px;color:#1e1e1e">Dependencies</div>
<svg style="left:1433px;top:261.7px" width="7" height="11" viewBox="0 0 7 11"><path d="M0.7 0.9 L6 5.5 L0.7 10.1 Z" fill="none" stroke="#3a3a3a" stroke-width="1.3"/></svg>
<svg style="left:1448.5px;top:264.2px" width="7" height="9" viewBox="0 0 7 9"><rect x="0" y="3.6" width="7" height="5.4" rx="0.8" fill="#2aa0dc"/><path d="M1.5 3.8 V2.6 C1.5 0.4 5.5 0.4 5.5 2.6 V3.8" fill="none" stroke="#2aa0dc" stroke-width="1.3"/><rect x="2.7" y="5.2" width="1.6" height="2.2" fill="#f5f7fc"/></svg>
<svg style="left:1458.5px;top:260.7px" width="16" height="13" viewBox="0 0 16 13"><path d="M0 1.2 H6 L7.3 2.6 H16 V13 H0 Z" fill="#dcb67a"/><path d="M0 3.4 H16 V13 H0 Z" fill="#e8c48a"/></svg>
<div class="t" style="left:1481px;top:259.2px;font-size:15px;color:#1e1e1e">Images</div>
<svg style="left:1433px;top:283.5px" width="7" height="11" viewBox="0 0 7 11"><path d="M0.7 0.9 L6 5.5 L0.7 10.1 Z" fill="none" stroke="#3a3a3a" stroke-width="1.3"/></svg>
<svg style="left:1448.5px;top:286px" width="7" height="9" viewBox="0 0 7 9"><rect x="0" y="3.6" width="7" height="5.4" rx="0.8" fill="#2aa0dc"/><path d="M1.5 3.8 V2.6 C1.5 0.4 5.5 0.4 5.5 2.6 V3.8" fill="none" stroke="#2aa0dc" stroke-width="1.3"/><rect x="2.7" y="5.2" width="1.6" height="2.2" fill="#f5f7fc"/></svg>
<svg style="left:1459.5px;top:283px" width="15" height="11" viewBox="0 0 15 11"><text x="0" y="9.5" font-family="Liberation Sans" font-weight="bold" font-size="11.5" fill="#2e8b2e" textLength="13.2" lengthAdjust="spacingAndGlyphs">C#</text></svg>
<div class="t" style="left:1481px;top:281.0px;font-size:15px;color:#1e1e1e;transform:scaleX(0.94)">MeadowApp.cs</div>
<svg style="left:1433px;top:305.3px" width="7" height="11" viewBox="0 0 7 11"><path d="M0.7 0.9 L6 5.5 L0.7 10.1 Z" fill="none" stroke="#3a3a3a" stroke-width="1.3"/></svg>
<svg style="left:1448.5px;top:307.8px" width="7" height="9" viewBox="0 0 7 9"><rect x="0" y="3.6" width="7" height="5.4" rx="0.8" fill="#2aa0dc"/><path d="M1.5 3.8 V2.6 C1.5 0.4 5.5 0.4 5.5 2.6 V3.8" fill="none" stroke="#2aa0dc" stroke-width="1.3"/><rect x="2.7" y="5.2" width="1.6" height="2.2" fill="#f5f7fc"/></svg>
<svg style="left:1459.5px;top:304.8px" width="15" height="11" viewBox="0 0 15 11"><text x="0" y="9.5" font-family="Liberation Sans" font-weight="bold" font-size="11.5" fill="#2e8b2e" textLength="13.2" lengthAdjust="spacingAndGlyphs">C#</text></svg>
<div class="t" style="left:1481px;top:302.8px;font-size:15px;color:#1e1e1e;transform:scaleX(0.895)">Program.cs</div>
<svg style="left:1433px;top:327.1px" width="7" height="11" viewBox="0 0 7 11"><path d="M0.7 0.9 L6 5.5 L0.7 10.1 Z" fill="none" stroke="#3a3a3a" stroke-width="1.3"/></svg>
<svg style="left:1448.5px;top:329.6px" width="7" height="9" viewBox="0 0 7 9"><rect x="0" y="3.6" width="7" height="5.4" rx="0.8" fill="#2aa0dc"/><path d="M1.5 3.8 V2.6 C1.5 0.4 5.5 0.4 5.5 2.6 V3.8" fill="none" stroke="#2aa0dc" stroke-width="1.3"/><rect x="2.7" y="5.2" width="1.6" height="2.2" fill="#f5f7fc"/></svg>
<svg style="left:1459.5px;top:326.6px" width="15" height="11" viewBox="0 0 15 11"><text x="0" y="9.5" font-family="Liberation Sans" font-weight="bold" font-size="11.5" fill="#2e8b2e" textLength="13.2" lengthAdjust="spacingAndGlyphs">C#</text></svg>
<div class="t" style="left:1481px;top:324.6px;font-size:15px;color:#1e1e1e;transform:scaleX(0.838)">RPSLSView.cs</div>
<svg style="left:1433px;top:348.9px" width="7" height="11" viewBox="0 0 7 11"><path d="M0.7 0.9 L6 5.5 L0.7 10.1 Z" fill="none" stroke="#3a3a3a" stroke-width="1.3"/></svg>
<svg style="left:1448.5px;top:351.4px" width="7" height="9" viewBox="0 0 7 9"><rect x="0" y="3.6" width="7" height="5.4" rx="0.8" fill="#2aa0dc"/><path d="M1.5 3.8 V2.6 C1.5 0.4 5.5 0.4 5.5 2.6 V3.8" fill="none" stroke="#2aa0dc" stroke-width="1.3"/><rect x="2.7" y="5.2" width="1.6" height="2.2" fill="#f5f7fc"/></svg>
<svg style="left:1459.5px;top:348.4px" width="15" height="11" viewBox="0 0 15 11"><text x="0" y="9.5" font-family="Liberation Sans" font-weight="bold" font-size="11.5" fill="#2e8b2e" textLength="13.2" lengthAdjust="spacingAndGlyphs">C#</text></svg>
<div class="t" style="left:1481px;top:346.4px;font-size:15px;color:#1e1e1e;transform:scaleX(0.824)">RSPLSGame.cs</div>
<!--TREEEND-->
<!-- bottom tabs -->
<div class="abs" style="left:1399px;top:480px;width:120px;height:22px;background:#f5f7fc"></div>
<div class="abs" style="left:1519px;top:480px;width:103px;height:22px;background:#40508d"></div>
<div class="t" style="left:1405px;top:483px;font-size:15.5px;color:#1e1e1e;transform:scaleX(.91)">Solution Explorer</div>
<div class="t" style="left:1527px;top:483px;font-size:15.5px;color:#fff;transform:scaleX(.9)">Team Explorer</div>
<!-- ================= Properties ================= -->
<div class="abs" style="left:1399px;top:512px;width:410px;height:25px;background:#40508d"></div>
<div class="t" style="left:1403px;top:516px;font-size:15.5px;color:#fff;transform:scaleX(.895)">Properties</div>
<div class="dd" style="left:1751px;top:521px;border-width:5px 5px 0 5px;border-top-color:#d5dbef"></div>
<svg style="left:1770px;top:516px" width="11" height="15" viewBox="0 0 11 15"><path d="M3 1 H8 M3.5 1 V7 M7.5 1 V7 M6.3 1 V7 M1 7.5 H10 M5.5 8 V14" fill="none" stroke="#d5dbef" stroke-width="1.3"/></svg>
<svg style="left:1791px;top:518px" width="11" height="11" viewBox="0 0 11 11"><path d="M0.7 0.7 L10.3 10.3 M10.3 0.7 L0.7 10.3" stroke="#d5dbef" stroke-width="1.5"/></svg>
<div class="abs" style="left:1399px;top:537px;width:410px;height:27px;background:#fffffe"></div>
<div class="dd" style="left:1797px;top:549px;border-width:4px 3.5px 0 3.5px"></div>
<div class="abs" style="left:1399px;top:564px;width:410px;height:30px;background:#ccd5f0"></div>
<svg style="left:1407px;top:571px" width="18" height="16" viewBox="0 0 18 16"><rect x="0.8" y="0.8" width="5" height="5" fill="#fff" stroke="#2a2a2a" stroke-width="1.5"/><rect x="0.8" y="9.8" width="5" height="5" fill="#fff" stroke="#2a2a2a" stroke-width="1.5"/><path d="M9 0 V8 M11.5 0 V8 M14 0 V8 M16.5 0 V8" stroke="#6a6a72" stroke-width="1.4"/><path d="M8 11 H14 M8 14 H13 M15 14 H17.5" stroke="#6a6a72" stroke-width="1.8"/></svg>
<div class="abs" style="left:1430px;top:565px;width:27px;height:27px;background:#fdeab5;border:1px solid #e5c365"></div>
<svg style="left:1434px;top:570px" width="19" height="17" viewBox="0 0 19 17"><rect x="0.5" y="0" width="8" height="7.5" fill="#4a4a4a"/><path d="M2.6 6.2 L4.5 1.5 L6.4 6.2 M3.3 4.6 H5.7" fill="none" stroke="#fdeab5" stroke-width="1.1"/><path d="M1.5 9.6 H7.5 L1.5 15.6 H7.5" fill="none" stroke="#2a2a2a" stroke-width="1.7"/><path d="M14 2 V13.5 M10 9.5 L14 14 L18 9.5" fill="none" stroke="#0a5aa8" stroke-width="2"/></svg>
<div class="abs" style="left:1459.5px;top:567px;width:1.6px;height:23px;background:#a3afd2"></div>
<svg style="left:1467px;top:570px" width="18" height="18" viewBox="0 0 17 17"><path d="M16.3 4.2 C16.8 7.5 13.8 10 10.8 8.8 L3.6 16 C2.2 17.2 0 15.2 1.2 13.7 L8.4 6.5 C7.2 3.3 9.8 0.4 13 1 L10.6 3.6 L11.2 6 L13.7 6.6 Z" fill="#9a9aa2"/></svg>
<div class="abs" style="left:1399px;top:594px;width:410px;height:345px;background:#f5f7fc"></div>
<!-- status bar -->
<div class="abs" style="left:0;top:946px;width:1809px;height:28px;background:#40508d"></div>
<svg style="left:0;top:954px" width="19" height="14" viewBox="0 0 19 14"><path d="M4 0.8 H17.8 L15 13.2 H0.8 Z" fill="none" stroke="#e8ecf8" stroke-width="1.3"/></svg>
<div class="t" style="left:28px;top:953px;font-size:15.5px;color:#fff;transform:scaleX(.87)">Ready</div>
<svg style="left:1423px;top:954px" width="12" height="14" viewBox="0 0 12 14"><path d="M6 13.5 V2 M1 6.5 L6 1.2 L11 6.5" fill="none" stroke="#e8ecf8" stroke-width="2"/></svg>
<div class="t" style="left:1445px;top:953px;font-size:15.5px;color:#fff">0</div>
<svg style="left:1481px;top:954px" width="14" height="14" viewBox="0 0 14 14"><path d="M10 0.8 L13.2 4 L4.5 12.7 L0.5 13.5 L1.3 9.5 Z" fill="#e8ecf8"/><path d="M8.3 2.5 L11.5 5.7" stroke="#40508d" stroke-width="1"/></svg>
<div class="t" style="left:1504px;top:953px;font-size:15.5px;color:#fff">0</div>
<svg style="left:1538px;top:952px" width="18" height="18" viewBox="0 0 18 18"><rect x="3" y="3" width="12" height="12" rx="1" transform="rotate(45 9 9)" fill="#e8ecf8"/><path d="M6.2 5.8 L9.5 9 V13 M9.5 9 H12" fill="none" stroke="#40508d" stroke-width="1.4"/><circle cx="9.5" cy="13" r="1.2" fill="#40508d"/><circle cx="12.3" cy="9" r="1.2" fill="#40508d"/></svg>
<div class="t" style="left:1562px;top:953px;font-size:15.5px;color:#fff">Ignite2019</div>
<svg style="left:1655px;top:952px" width="18" height="17" viewBox="0 0 18 17"><path d="M9 16 V9 L3 3 M9 9 L15 3" fill="none" stroke="#e8ecf8" stroke-width="2.2"/><path d="M0.5 0.8 H6.5 L0.5 6.8 Z M17.5 0.8 H11.5 L17.5 6.8 Z" fill="#e8ecf8"/></svg>
<div class="t" style="left:1681px;top:953px;font-size:15.5px;color:#fff;transform:scaleX(.875)">master</div>
<svg style="left:1730px;top:958px" width="10" height="6" viewBox="0 0 10 6"><path d="M0 6 L5 0.5 L10 6 Z" fill="#fff"/></svg>
<svg style="left:1771px;top:951px" width="16" height="17" viewBox="0 0 16 17"><path d="M8 0.8 C4.5 0.8 3.3 3.5 3.3 6.5 C3.3 10 1.5 11.5 0.8 12.8 H15.2 C14.5 11.5 12.7 10 12.7 6.5 C12.7 3.5 11.5 0.8 8 0.8 Z M6 14 H10 C10 16.5 6 16.5 6 14 Z" fill="#c9cfe4"/></svg>
<div class="abs" style="left:1781px;top:957px;width:16px;height:16px;border-radius:8px;background:#e51320"></div>
<div class="t" style="left:1785.5px;top:959px;font-size:12px;color:#fff">4</div>
<!-- taskbar -->
<div class="abs" style="left:0;top:974px;width:1809px;height:42px;background:#474746"></div>
<div class="abs" style="left:405px;top:974px;width:58px;height:42px;background:#6d6d6b"></div>
<svg style="left:13px;top:988px" width="21" height="20" viewBox="0 0 21 20"><path d="M0 3 L8.6 1.8 V9.5 H0 Z M9.8 1.6 L21 0 V9.5 H9.8 Z M0 10.5 H8.6 V18.2 L0 17 Z M9.8 10.5 H21 V20 L9.8 18.4 Z" fill="#fff"/></svg>
<svg style="left:70px;top:987px" width="21" height="21" viewBox="0 0 21 21"><circle cx="10.5" cy="10.5" r="8.3" fill="none" stroke="#fff" stroke-width="2.4"/></svg>
<svg style="left:127px;top:988px" width="20" height="20" viewBox="0 0 20 20"><path d="M1 1 V4 H13 V1 M1 19 V16 H13 V19" fill="none" stroke="#e8e8e8" stroke-width="1.4"/><rect x="1" y="6" width="12" height="8" fill="none" stroke="#e8e8e8" stroke-width="1.4"/><path d="M18 1 V19" stroke="#e8e8e8" stroke-width="1.4"/><rect x="16.8" y="7" width="2.4" height="3.4" fill="#e8e8e8"/></svg>
<!-- edge beta -->
<svg style="left:186px;top:985px" width="27" height="26" viewBox="0 0 27 26"><path d="M1.5 11.5 C2.5 4.5 8 0.8 13.5 0.8 C20.5 0.8 25 5.5 25 12.5 V15 H9.5 C9.8 19 13 21 16.5 21 C19.5 21 21.8 20.2 23.8 19 V23.6 C21.5 24.8 18.8 25.4 15.5 25.4 C8.5 25.4 3.8 21.2 3.8 14.5 C3.8 10.5 6 7.5 9 6 C7.5 7.5 6.8 9.2 6.6 10.8 H18.6 C18.6 7 16.6 5.3 13.2 5.3 C8.2 5.3 3.6 8 1.5 11.5 Z" fill="#0f7fd6"/><g transform="rotate(-17 13 13.5)"><rect x="0.5" y="9.2" width="25" height="8.4" fill="#52dbe8"/><text x="2.6" y="16.2" font-family="Liberation Sans" font-weight="bold" font-size="7.4" fill="#0c2a3a" textLength="20.5" lengthAdjust="spacingAndGlyphs">BETA</text></g></svg>
<!-- explorer -->
<svg style="left:243px;top:986px" width="28" height="23" viewBox="0 0 28 23"><path d="M1 1.5 Q1 0.5 2 0.5 H10 L12.3 3 H26 Q27 3 27 4 V8 H1 Z" fill="#e9a826"/><path d="M1 5 H10 L12.5 3 H27 V21.5 Q27 22.5 26 22.5 H2 Q1 22.5 1 21.5 Z" fill="#ffd254"/><path d="M5.5 22.5 V15 Q5.5 13 7.5 13 H20.5 Q22.5 13 22.5 15 V22.5 H18.5 V17 H9.5 V22.5 Z" fill="#3f95e6"/><rect x="9.5" y="17" width="9" height="5.5" fill="#f4c030"/></svg>
<!-- vscode -->
<svg style="left:301px;top:984px" width="30" height="29" viewBox="0 0 30 29"><path d="M1.4 9.6 Q0.6 8.6 1.6 7.8 L3 6.8 Q3.9 6.2 4.8 7 L21.5 20.6 V28.5 Z" fill="#1a8fe0"/><path d="M1.4 19.4 Q0.6 20.4 1.6 21.2 L3 22.2 Q3.9 22.8 4.8 22 L21.5 8.4 V0.5 Z" fill="#23a0ee"/><path d="M21.5 0.5 L29.5 4.2 V24.8 L21.5 28.5 Z" fill="#35b4f8"/></svg>
<!-- terminal -->
<svg style="left:360px;top:987px" width="29" height="22" viewBox="0 0 29 22"><rect x="0.5" y="0.5" width="28" height="21" rx="1.5" fill="#2b2b2b"/><rect x="0.5" y="0.5" width="28" height="4.2" fill="#c9c9c9"/><rect x="10" y="0.5" width="9" height="4.2" fill="#e4e4e4"/><path d="M4 8.2 L10 12.2 L4 16.2" fill="none" stroke="#f2f2f2" stroke-width="2.3"/><rect x="12.5" y="15" width="9" height="2.3" fill="#f2f2f2"/></svg>
<!-- VS -->
<svg style="left:419px;top:984px" width="30" height="29" viewBox="0 0 30 29"><path d="M1.6 7.8 L4 6.2 L21 19.6 V27.6 Z" fill="#8648cc"/><path d="M1.6 21.2 L4 22.8 L21 9.4 V1.4 Z" fill="#9054d8"/><path d="M0.6 10 L1.6 7.8 L5.6 11.4 L3.6 14.5 L5.6 17.6 L1.6 21.2 L0.6 19 Z" fill="#6e38b0"/><path d="M22.3 0.5 L29.5 4 V25 L22.3 28.5 Z" fill="#a468ee"/></svg>
<svg style="left:1709px;top:993px" width="17" height="9" viewBox="0 0 17 9"><path d="M0.8 8.3 L8.5 0.9 L16.2 8.3" fill="none" stroke="#fff" stroke-width="1.3"/></svg>
<svg style="left:1745px;top:989px" width="21" height="14" viewBox="0 0 21 14"><rect x="3.5" y="3" width="15" height="9.5" fill="none" stroke="#fff" stroke-width="1.3"/><rect x="5.3" y="4.8" width="11.4" height="5.9" fill="#fff"/><rect x="19" y="6" width="1.8" height="4" fill="#fff"/><path d="M0.5 2 L4.5 0.5 L4 3 L6.5 2.5 L2 6.5 L2.8 3.8 Z" fill="#fff"/></svg>
<svg style="left:1783px;top:988px" width="22" height="20" viewBox="0 0 22 20"><path d="M5.5 1.7 H20.3 V14.3 H5.5 Z M8.5 18.8 H17 M12.7 14.3 V18.8" fill="none" stroke="#fff" stroke-width="1.3"/><rect x="0.7" y="0.7" width="4.6" height="3.8" fill="#474746" stroke="#fff" stroke-width="1"/><path d="M3 4.5 V8.5" stroke="#fff" stroke-width="1"/></svg>
</body>
</html>
